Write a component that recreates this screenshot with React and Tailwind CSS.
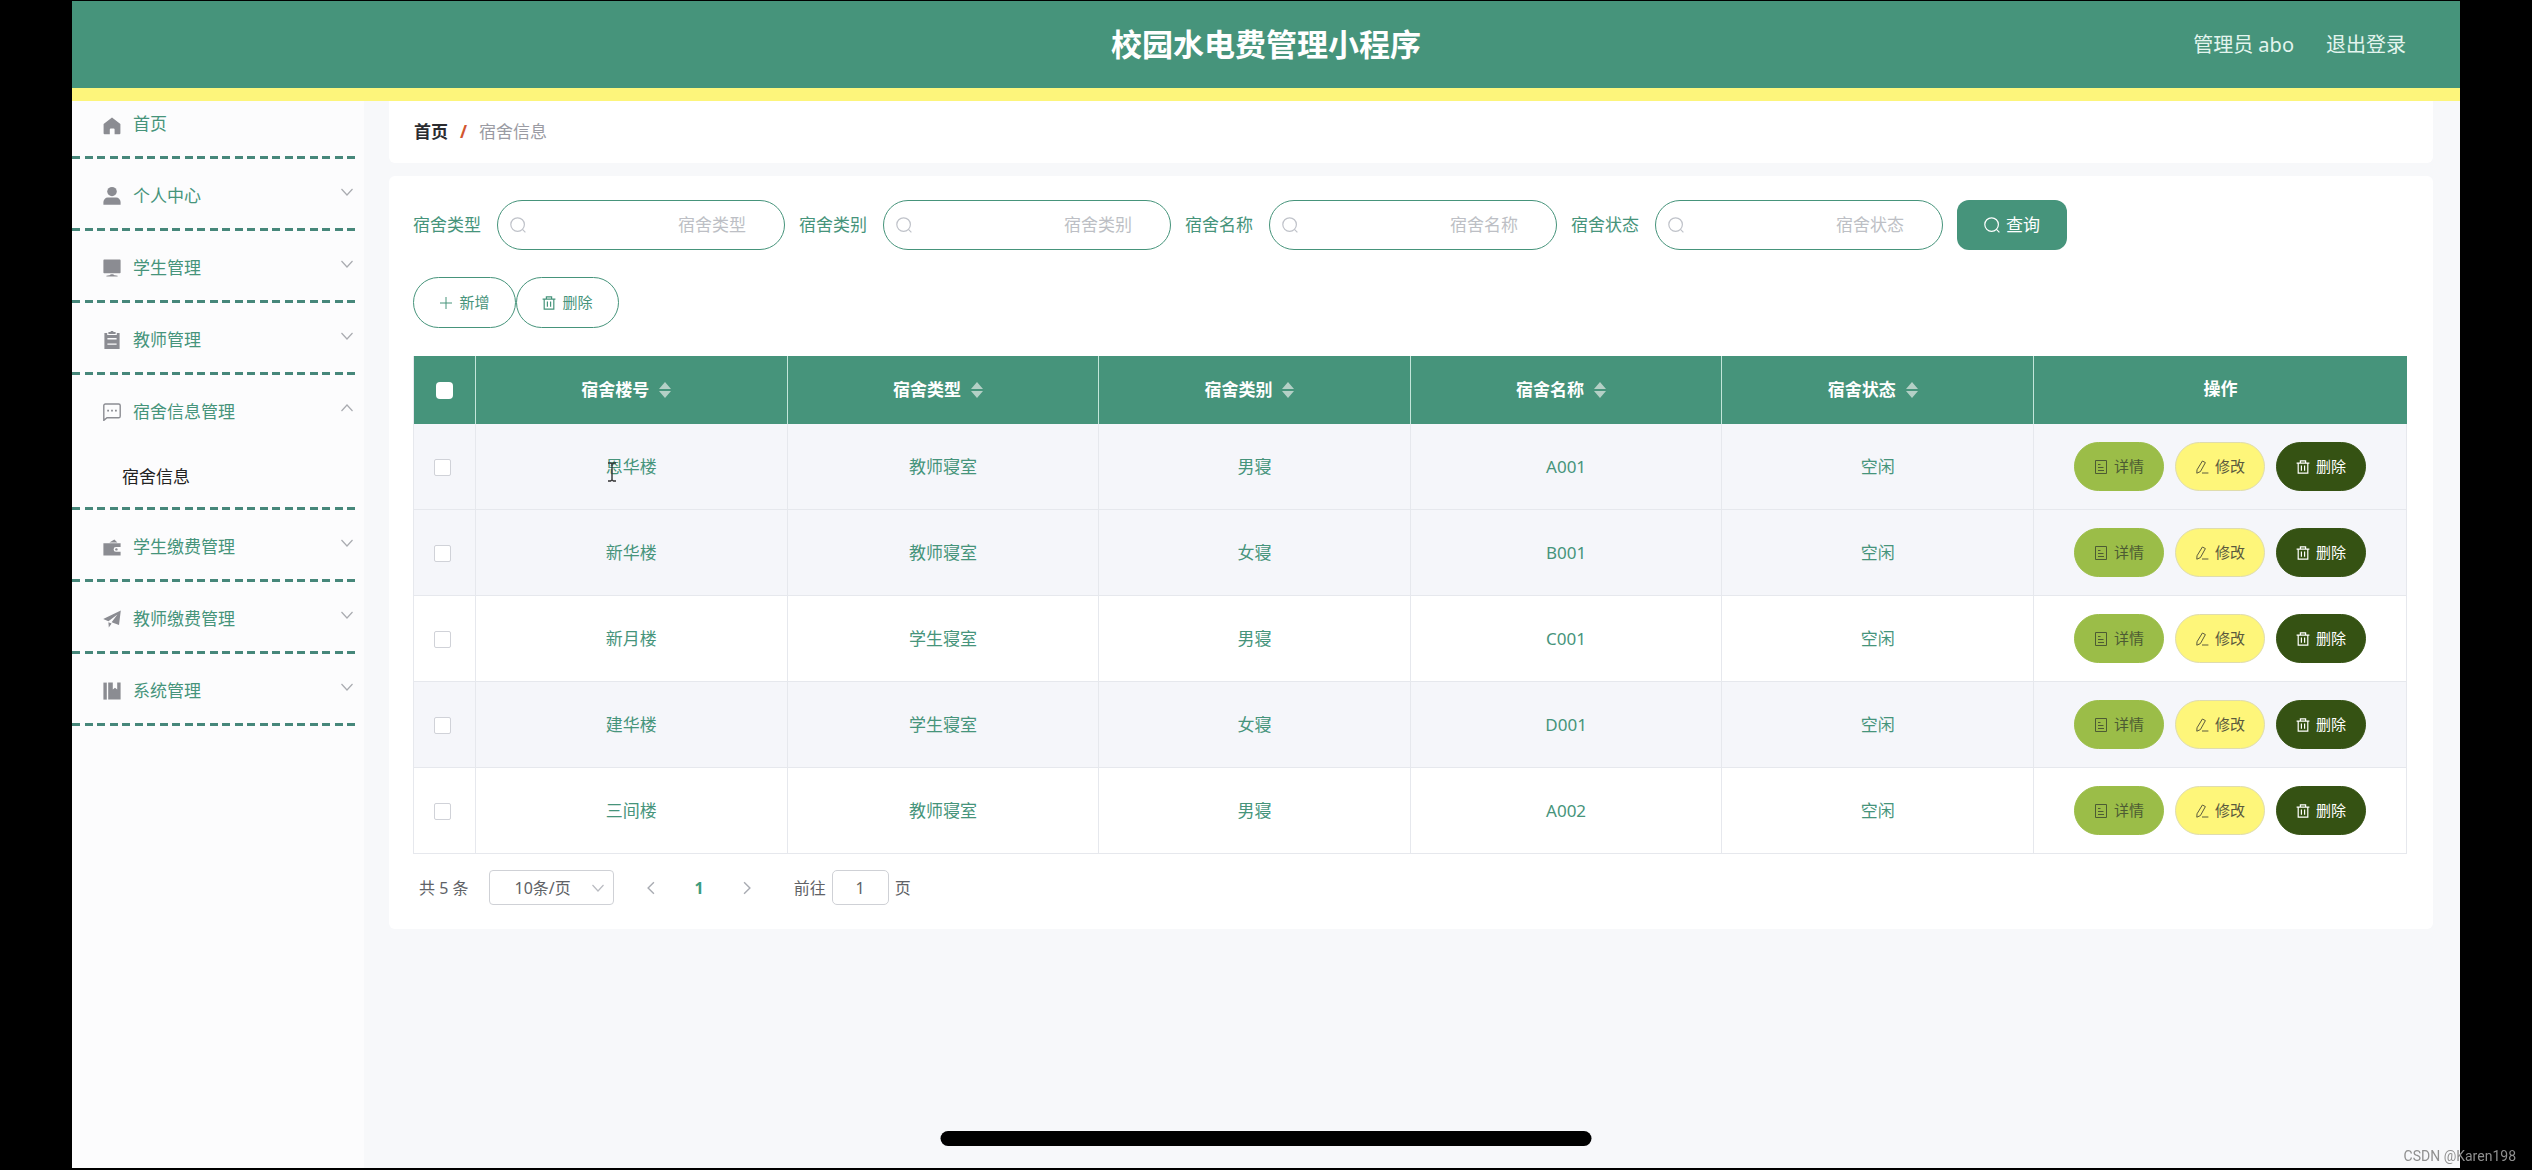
import { useState } from 'react';

function HomeIcon() {
  return (
    <svg viewBox="0 0 18 18" className="h-[18px] w-[18px]" fill="currentColor" aria-hidden="true">
      <path d="M9 0.6 L17.4 7 V16.2 a1 1 0 0 1 -1 1 H11.6 V12.4 a1 1 0 0 0 -1 -1 H7.8 a1 1 0 0 0 -1 1 V17.2 H1.6 a1 1 0 0 1 -1 -1 V7 Z" />
    </svg>
  );
}

function UserIcon() {
  return (
    <svg viewBox="0 0 18 18" className="h-[18px] w-[18px]" fill="currentColor" aria-hidden="true">
      <ellipse cx="9" cy="4.6" rx="4.8" ry="4.6" />
      <path d="M0.4 17.8 V15 a4.4 4.4 0 0 1 4.4 -4.4 H13.2 a4.4 4.4 0 0 1 4.4 4.4 V17.8 Z" />
    </svg>
  );
}

function PlatformIcon() {
  return (
    <svg viewBox="0 0 18 18" className="h-[18px] w-[18px]" fill="currentColor" aria-hidden="true">
      <path d="M1.2 0.6 H16.8 a0.8 0.8 0 0 1 0.8 0.8 V13.4 a0.8 0.8 0 0 1 -0.8 0.8 H1.2 a0.8 0.8 0 0 1 -0.8 -0.8 V1.4 a0.8 0.8 0 0 1 0.8 -0.8 Z" />
      <path d="M7.4 15.2 H10.6 V16 L14.6 16.8 V17.6 H3.4 V16.8 L7.4 16 Z" />
    </svg>
  );
}

function OrderIcon() {
  return (
    <svg viewBox="0 0 18 18" className="h-[18px] w-[18px]" fill="currentColor" aria-hidden="true">
      <path
        fillRule="evenodd"
        d="M1.4 2 H4.2 V4 H13.8 V2 H16.6 V18 H1.4 Z M4.4 7 V8.4 H13.6 V7 Z M4.4 12.4 V13.8 H13.6 V12.4 Z"
      />
      <path d="M5.4 1 H7.4 L8 0 H10 L10.6 1 H12.6 V3 H5.4 Z" />
    </svg>
  );
}

function ChatIcon() {
  return (
    <svg viewBox="0 0 18 18" className="h-[18px] w-[18px]" fill="none" stroke="currentColor" strokeWidth="1.4" aria-hidden="true">
      <path d="M2.4 1 H15.6 a1.6 1.6 0 0 1 1.6 1.6 V13.2 a1.6 1.6 0 0 1 -1.6 1.6 H4 L0.8 17.4 V2.6 a1.6 1.6 0 0 1 1.6 -1.6 Z" />
      <path d="M4.2 7.6 H6 M8.1 7.6 H9.9 M12 7.6 H13.8" strokeWidth="1.8" />
    </svg>
  );
}

function WalletIcon() {
  return (
    <svg viewBox="0 0 18 18" className="h-[18px] w-[18px]" fill="currentColor" aria-hidden="true">
      <path d="M6.4 4.4 L11.4 1.4 L14.4 4.4 Z" />
      <path d="M0.4 5.2 H17.6 V9 H13 a2.3 2.3 0 0 0 0 4.8 H17.6 V17.4 H0.4 Z" />
      <circle cx="13.4" cy="11.4" r="1.2" />
    </svg>
  );
}

function PromotionIcon() {
  return (
    <svg viewBox="0 0 18 18" className="h-[18px] w-[18px]" fill="currentColor" aria-hidden="true">
      <path d="M17.8 0.4 L16 15 L8.6 12.2 L14.4 4.6 L5.4 11.2 L0.2 9 Z" />
      <path d="M5.4 12.2 L8.6 13.4 L5.8 17.6 Z" />
    </svg>
  );
}

function NotebookIcon() {
  return (
    <svg viewBox="0 0 18 18" className="h-[18px] w-[18px]" fill="currentColor" aria-hidden="true">
      <path d="M0.4 0.6 H3.8 V17.6 H0.4 Z" />
      <path d="M5.2 0.6 H9.8 V7.6 L12 5.8 L14.2 7.6 V0.6 H17.6 V17.6 H5.2 Z" />
    </svg>
  );
}

function Chevron({ className, d }) {
  return (
    <svg viewBox="0 0 12 12" className={className} fill="none" stroke="currentColor" strokeWidth="1.2" aria-hidden="true">
      <path d={d} />
    </svg>
  );
}

function SearchIcon({ className }) {
  return (
    <svg viewBox="0 0 16 16" className={className} fill="none" stroke="currentColor" strokeWidth="1.2" aria-hidden="true">
      <circle cx="7.6" cy="7.6" r="6.8" />
      <path d="M12.4 12.4 L15.4 15.4" />
    </svg>
  );
}

function TrashIcon() {
  return (
    <svg viewBox="0 0 14 14" className="h-3.5 w-3.5" fill="none" stroke="currentColor" strokeWidth="1.2" aria-hidden="true">
      <path d="M0.6 3.2 H13.4 M4.4 3 V0.8 H9.6 V3 M2.2 3.2 V13.2 H11.8 V3.2 M5.4 5.6 V10.8 M8.6 5.6 V10.8" />
    </svg>
  );
}

function PlusIcon() {
  return (
    <svg viewBox="0 0 14 14" className="h-3.5 w-3.5" fill="none" stroke="currentColor" aria-hidden="true">
      <path d="M7 1 V13 M1 7 H13" />
    </svg>
  );
}

function DetailIcon() {
  return (
    <svg viewBox="0 0 14 14" className="h-3.5 w-3.5" fill="none" stroke="currentColor" aria-hidden="true">
      <path d="M1.5 0.5 H12.5 V13.5 H1.5 Z M4 4.5 H6.5 M4 7.5 H9.5 M4 10.5 H10" />
    </svg>
  );
}

function EditIcon() {
  return (
    <svg viewBox="0 0 14 14" className="h-3.5 w-3.5" fill="none" stroke="currentColor" aria-hidden="true">
      <path d="M7.4 1 L10.4 2.6 L5.4 11.6 L1.8 13.2 L2 9.8 Z M7 13 H13.4" />
    </svg>
  );
}

const menu = [
  { label: '个人中心', Icon: UserIcon },
  { label: '学生管理', Icon: PlatformIcon },
  { label: '教师管理', Icon: OrderIcon },
  { label: '宿舍信息管理', Icon: ChatIcon, children: ['宿舍信息'] },
  { label: '学生缴费管理', Icon: WalletIcon },
  { label: '教师缴费管理', Icon: PromotionIcon },
  { label: '系统管理', Icon: NotebookIcon },
];

const filters = ['宿舍类型', '宿舍类别', '宿舍名称', '宿舍状态'];

const columns = ['宿舍楼号', '宿舍类型', '宿舍类别', '宿舍名称', '宿舍状态'];

const rows = [
  ['恩华楼', '教师寝室', '男寝', 'A001', '空闲'],
  ['新华楼', '教师寝室', '女寝', 'B001', '空闲'],
  ['新月楼', '学生寝室', '男寝', 'C001', '空闲'],
  ['建华楼', '学生寝室', '女寝', 'D001', '空闲'],
  ['三间楼', '教师寝室', '男寝', 'A002', '空闲'],
];

function DashedLine() {
  return (
    <div className="h-[3px] bg-[repeating-linear-gradient(to_right,#46877a_0px,#46877a_8px,transparent_8px,transparent_13px,#46877a_13px,#46877a_21px,transparent_21px,transparent_25px)]" />
  );
}

function Sidebar() {
  const [open, setOpen] = useState('宿舍信息管理');

  return (
    <nav className="w-[292px] shrink-0 bg-[#fcfcfd] pr-[9px] text-[17px]">
      <a href="#home" className="flex h-[55px] items-center gap-3 pb-2.5 pl-[31px] text-[#46947b]">
        <span className="pt-1 text-[#8b8c92]">
          <HomeIcon />
        </span>
        首页
      </a>
      <DashedLine />
      {menu.map(({ label, Icon, children }) => {
        const expanded = open === label;
        return (
          <div key={label}>
            <button
              type="button"
              aria-expanded={expanded}
              onClick={() => setOpen(expanded ? null : label)}
              className="flex h-[69px] w-full items-center gap-3 pt-1 pr-0.5 pl-[31px] text-[#46947b]"
            >
              <span className="text-[#8b8c92]">
                <Icon />
              </span>
              {label}
              <Chevron
                className="mb-2 ml-auto h-3 w-3 text-[#a9abb0]"
                d={expanded ? 'M0.5 9 L6 3 L11.5 9' : 'M0.5 3 L6 9 L11.5 3'}
              />
            </button>
            {expanded &&
              children?.map((child) => (
                <a key={child} href="#dormitory" className="flex h-[63px] items-center pt-0.5 pl-[50px] text-[#222]">
                  {child}
                </a>
              ))}
            <DashedLine />
          </div>
        );
      })}
    </nav>
  );
}

function FilterBar() {
  return (
    <form className="flex flex-wrap items-center gap-3.5" onSubmit={(e) => e.preventDefault()}>
      {filters.map((name) => (
        <label key={name} className="flex items-center gap-4 text-[17px] text-[#46947b]">
          {name}
          <span className="flex h-[50px] w-72 items-center rounded-full border border-[#46947b] pr-[38px] pl-3">
            <SearchIcon className="h-4 w-4 shrink-0 text-[#bfc2c9]" />
            <input
              type="text"
              placeholder={name}
              className="w-full min-w-0 bg-transparent text-right outline-none placeholder:text-[#bdbfc5]"
            />
          </span>
        </label>
      ))}
      <button
        type="submit"
        className="flex h-[50px] w-[110px] items-center justify-center gap-1.5 rounded-xl bg-[#46947b] text-[17px] text-white"
      >
        <SearchIcon className="h-4 w-4" />
        查询
      </button>
    </form>
  );
}

function SortCaret() {
  return (
    <svg viewBox="0 0 32 16" className="h-4 w-8" fill="#b4d0c6" aria-hidden="true">
      <path d="M16 0 L22 7 H10 Z M10 9 H22 L16 16 Z" />
    </svg>
  );
}

function TextCursor() {
  return (
    <svg
      viewBox="0 0 10 20"
      className="absolute top-[38px] left-[131px] h-5 w-2.5"
      fill="none"
      stroke="#333"
      strokeWidth="1.4"
      aria-hidden="true"
    >
      <path d="M1 1 H3.6 L5 2.2 L6.4 1 H9 M5 2.2 V17.8 M1 19 H3.6 L5 17.8 L6.4 19 H9" />
    </svg>
  );
}

const actionClass = 'flex h-[49px] w-[90px] items-center justify-center gap-1.5 rounded-full border text-[15px]';

function RowActions() {
  return (
    <div className="flex justify-center gap-[11px]">
      <button type="button" className={`${actionClass} border-[#9bbd48] bg-[#9bbd48] text-[#4c5b33]`}>
        <DetailIcon />
        详情
      </button>
      <button type="button" className={`${actionClass} border-[#dfdcae] bg-[#fef67a] text-[#5b5a3e]`}>
        <EditIcon />
        修改
      </button>
      <button type="button" className={`${actionClass} border-[#355213] bg-[#355213] text-white`}>
        <TrashIcon />
        删除
      </button>
    </div>
  );
}

function DormTable() {
  return (
    <table className="w-full table-fixed border-separate border-spacing-0 border-l border-[#e6e8ed] text-center text-[17px]">
      <colgroup>
        <col className="w-[62px]" />
        {columns.map((name) => (
          <col key={name} />
        ))}
        <col className="w-[373px]" />
      </colgroup>
      <thead>
        <tr className="h-[68px] bg-[#46947b] text-white">
          <th className="border-r border-[#c3e6da] leading-none">
            <input
              type="checkbox"
              aria-label="全选"
              className="h-[17px] w-[17px] appearance-none rounded-sm bg-white align-middle"
            />
          </th>
          {columns.map((name) => (
            <th key={name} className="border-r border-[#c3e6da] pb-0.5 font-bold">
              <button type="button" className="inline-flex items-center align-middle">
                {name}
                <SortCaret />
              </button>
            </th>
          ))}
          <th className="pb-0.5 font-bold">操作</th>
        </tr>
      </thead>
      <tbody>
        {rows.map((row, i) => (
          <tr key={row[0]} className={`h-[86px] text-[#46947b] ${i < 2 || i === 3 ? 'bg-[#f5f6fa]' : 'bg-white'}`}>
            <td className="border-r border-b border-[#e6e8ed] pr-1 leading-none">
              <input
                type="checkbox"
                aria-label={row[0]}
                className="h-[17px] w-[17px] appearance-none rounded-xs border border-[#d0d2d8] bg-white align-middle"
              />
            </td>
            {row.map((cell, j) => (
              <td key={j} className="relative border-r border-b border-[#e6e8ed]">
                {cell}
                {i === 0 && j === 0 && <TextCursor />}
              </td>
            ))}
            <td className="border-r border-b border-[#e6e8ed]">
              <RowActions />
            </td>
          </tr>
        ))}
      </tbody>
    </table>
  );
}

function Pagination() {
  return (
    <div className="flex items-center pt-4 pl-1.5 text-base text-[#606266]">
      <span>共 5 条</span>
      <span className="relative ml-[21px]">
        <select
          aria-label="每页条数"
          className="h-[35px] w-[125px] appearance-none rounded-[4px] border border-[#cfd1d6] bg-white pl-6"
        >
          <option>10条/页</option>
        </select>
        <Chevron className="pointer-events-none absolute top-3 right-2.5 h-3 w-3 text-[#b9bbc1]" d="M0.5 3 L6 9 L11.5 3" />
      </span>
      <button type="button" aria-label="上一页" className="ml-[30px] text-[#a8abb2]">
        <Chevron className="h-3.5 w-3.5" d="M8.5 1 L3.5 6 L8.5 11" />
      </button>
      <button type="button" className="mx-9 font-bold text-[#3c9c80]">
        1
      </button>
      <button type="button" aria-label="下一页" className="text-[#a8abb2]">
        <Chevron className="h-3.5 w-3.5" d="M3.5 1 L8.5 6 L3.5 11" />
      </button>
      <label className="ml-10 flex items-center gap-1.5">
        前往
        <input
          type="text"
          defaultValue="1"
          className="h-[35px] w-[57px] rounded-[5px] border border-[#cfd1d6] bg-white text-center"
        />
        页
      </label>
    </div>
  );
}

export default function App() {
  return (
    <div className="flex min-h-screen flex-col bg-black px-[72px] pt-px pb-0.5 font-['Noto_Sans','Noto_Sans_CJK_SC',sans-serif]">
      <header className="grid h-[100px] grid-cols-[1fr_auto_1fr] items-center border-b-[13px] border-[#fdf57b] bg-[#46947b]">
        <h1 className="col-start-2 text-[31px] font-bold text-white">校园水电费管理小程序</h1>
        <div className="flex justify-end gap-8 pr-[54px] text-xl text-[#e3f4ee]">
          <span>管理员 abo</span>
          <a href="#logout">退出登录</a>
        </div>
      </header>

      <div className="flex grow bg-[#f7f8fa]">
        <Sidebar />
        <main className="min-w-0 grow pr-[27px] pl-[25px]">
          <div className="flex h-[62px] items-center gap-3 rounded-b-md bg-white px-[25px] text-[17px]">
            <a href="#home" className="font-bold text-[#2b2c30]">
              首页
            </a>
            <span className="font-bold text-[#d2562f]">/</span>
            <span className="text-[#9a9ba3]">宿舍信息</span>
          </div>

          <section className="mt-[13px] rounded-md bg-white pt-6 pr-[26px] pb-6 pl-6">
            <FilterBar />
            <div className="mt-[27px] mb-7 flex">
              <button
                type="button"
                className="flex h-[51px] w-[103px] items-center justify-center gap-1.5 rounded-full border border-[#46947b] text-[15px] text-[#46947b]"
              >
                <PlusIcon />
                新增
              </button>
              <button
                type="button"
                className="flex h-[51px] w-[103px] items-center justify-center gap-1.5 rounded-full border border-[#46947b] text-[15px] text-[#46947b]"
              >
                <TrashIcon />
                删除
              </button>
            </div>
            <DormTable />
            <Pagination />
          </section>
        </main>
      </div>

      <div className="fixed bottom-6 left-1/2 h-[15px] w-[651px] -translate-x-1/2 rounded-full bg-black" />
      <div className="fixed right-4 bottom-1 font-[Roboto,sans-serif] text-sm text-[#8f8f8f]">CSDN @Karen198</div>
    </div>
  );
}
